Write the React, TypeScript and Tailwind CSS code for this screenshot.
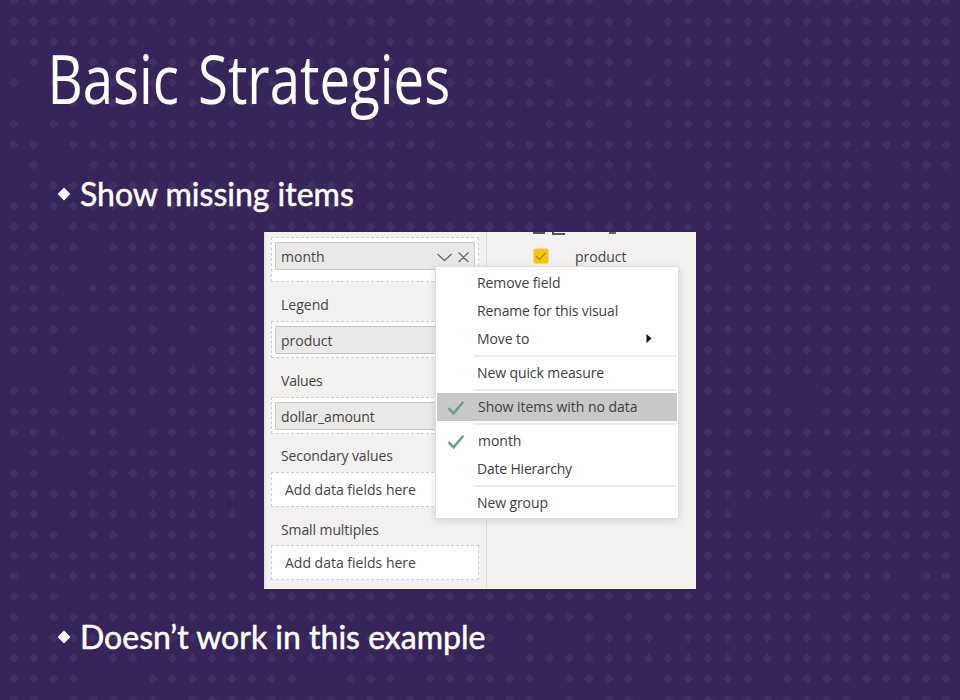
import type { ReactNode } from "react";

// Columns left empty in each row of the diamond backdrop.
const GAPS: number[][] = [
  [4, 8, 12, 19, 23, 30, 35],
  [9, 15, 20, 23, 32],
  [7, 17, 39],
  [0, 13, 27, 32, 37],
  [1, 28, 31, 34],
  [0, 1, 2, 44],
  [1, 4, 12, 26, 30, 32],
  [2, 22, 23],
  [0, 2, 3, 10, 13, 20, 33, 34, 37, 44],
  [0, 22, 34, 44, 47],
  [22, 30, 37],
  [2, 9, 28, 37],
  [4],
  [4, 11, 36, 40],
  [3, 47],
  [],
  [4, 5, 8, 10],
  [3, 9],
  [0, 1, 2, 7, 46],
  [2, 39, 40],
  [7, 35, 40],
  [3, 6],
  [0, 9, 37, 41],
  [2, 3, 37, 44],
  [6],
  [2, 12, 37, 38, 39, 40],
  [3, 6, 11],
  [],
  [1, 11, 38, 45],
  [3, 20, 44],
  [1, 30, 32, 41],
  [25, 27, 28, 33],
  [4, 7, 25],
  [4, 5, 6, 15, 16, 20, 27, 32, 38],
  [2, 8, 27, 29, 32, 43, 44],
];

function Backdrop() {
  const d = GAPS.map((gaps, row) =>
    Array.from({ length: 48 }, (_, col) =>
      gaps.includes(col)
        ? ""
        : `M${(13.8 + col * 19.835).toFixed(2)} ${(0.6 + row * 20.55 - 5).toFixed(2)}l5 5l-5 5l-5 -5z`
    ).join("")
  ).join("");
  return (
    <svg className="absolute inset-0" width="960" height="700" aria-hidden="true">
      <path d={d} fill="#3f3161" />
    </svg>
  );
}

function Bullet({ children }: { children: ReactNode }) {
  return (
    <div className="flex h-10 items-center pl-[57px] font-[Lato,sans-serif] text-[32px] leading-10 text-white">
      <svg width="14" height="14" viewBox="0 0 14 14" className="mr-[9px] shrink-0" fill="#fff">
        <path d="M7 .6L13.4 7L7 13.4L.6 7z" />
      </svg>
      <span className="whitespace-nowrap [-webkit-text-stroke:0.5px_white]">{children}</span>
    </div>
  );
}

function Well({ className, children }: { className: string; children: ReactNode }) {
  return (
    <div className={`ml-[7px] w-[208px] shrink-0 border-[1.5px] border-dashed border-[#cfcdcb] bg-white px-[3px] ${className}`}>
      {children}
    </div>
  );
}

function Pill({ children }: { children: ReactNode }) {
  return (
    <div className="mt-1 flex h-7 items-center rounded-[2px] border-[1.5px] border-[#c8c6c4] bg-[#ebe9e8] pl-[5px] pt-px">
      {children}
    </div>
  );
}

function Label({ className, children }: { className: string; children: ReactNode }) {
  return <div className={`flex shrink-0 items-center pl-[17px] ${className}`}>{children}</div>;
}

function Check() {
  return (
    <svg width="18" height="16" viewBox="0 0 18 16" fill="none" stroke="#5fa58c" strokeWidth="2.5">
      <path d="M1.5 8.2L6.6 13.4L16.3 1.8" />
    </svg>
  );
}

function Item({ children, checked, active, arrow }: { children: ReactNode; checked?: boolean; active?: boolean; arrow?: boolean }) {
  return (
    <div className={`mx-px flex h-7 shrink-0 items-center ${active ? "bg-[#c8c8c8]" : ""}`}>
      <span className="flex w-[40px] justify-start pl-[10px] pt-[2px]">{checked && <Check />}</span>
      <span className={`grow whitespace-nowrap ${checked ? "pl-px tracking-[-0.03px]" : "tracking-[-0.1px]"}`}>{children}</span>
      {arrow && (
        <svg width="6" height="9" viewBox="0 0 6 9" className="mr-[25px]">
          <path d="M.5 0L5.6 4.5L.5 9z" fill="#111" />
        </svg>
      )}
    </div>
  );
}

function Rule() {
  return <div className="my-[2px] ml-[38px] mr-px h-[2px] shrink-0 bg-[#ececec]" />;
}

function FieldPanel() {
  return (
    <div className="relative ml-[264px] flex h-[357px] w-[432px] overflow-hidden border-l-2 border-[#e8e6e4] bg-[#f2f1f0] font-['Open_Sans',sans-serif] text-[14px] leading-5 text-[#444]">
      <div className="-ml-[2px] flex w-[223px] shrink-0 flex-col border-r border-[#dddbd9] pt-[5px]">
        <Well className="h-[45px]">
          <Pill>
            <span className="grow">month</span>
            <svg width="38" height="14" viewBox="0 0 38 14" fill="none" stroke="#68666b" strokeWidth="1.3">
              <path d="M1.5 4L8.5 10.5L15.5 4M22.5 2.5L32.5 12M32.5 2.5L22.5 12" />
            </svg>
          </Pill>
        </Well>
        <Label className="h-[39px] pt-[7px]">Legend</Label>
        <Well className="h-[37px]"><Pill>product</Pill></Well>
        <Label className="h-[39px] pt-[6px]"><span className="tracking-[-0.2px]">Values</span></Label>
        <Well className="h-[37px]"><Pill><span className="tracking-[-0.1px]">dollar_amount</span></Pill></Well>
        <Label className="h-[38px] pt-[6px]"><span className="tracking-[-0.1px]">Secondary values</span></Label>
        <Well className="flex h-[35px] items-center"><span className="pl-[10px] pt-px">Add data fields here</span></Well>
        <Label className="h-[38px] pt-[7px]"><span className="tracking-[-0.1px]">Small multiples</span></Label>
        <Well className="flex h-[35px] items-center"><span className="pl-[10px] pt-px">Add data fields here</span></Well>
      </div>
      <div className="flex grow flex-col pl-[46px]">
        <div className="flex h-[3px] gap-[7px]">
          <span className="h-[2px] w-[12px] bg-[#55515a]" />
          <span className="h-[3px] w-[13px] border-b-2 border-l-2 border-[#55515a]" />
          <span className="ml-[37px] h-[2px] w-[7px] bg-[#66636a]" />
        </div>
        <div className="flex h-[43px] items-center">
          <svg width="16" height="16" viewBox="0 0 16 16" className="mb-[2px] mr-[26px]">
            <rect x=".5" y=".5" width="15" height="15" rx="2" fill="#f2c811" />
            <path d="M3 8.2L6.5 11.3L13 4.7" fill="none" stroke="#a48a20" strokeWidth="1.2" />
          </svg>
          <span>product</span>
        </div>
      </div>
      <div className="absolute left-[169px] top-[34px] flex h-[253px] w-[244px] flex-col border border-[#dedede] bg-white pt-[1.5px] text-[#404040] shadow-[0_2px_8px_rgba(0,0,0,0.12)]">
        <Item>Remove field</Item>
        <Item><span className="tracking-[-0.15px]">Rename for this visual</span></Item>
        <Item arrow>Move to</Item>
        <Rule />
        <Item>New quick measure</Item>
        <Rule />
        <Item checked active>Show items with no data</Item>
        <Rule />
        <Item checked>month</Item>
        <Item><span className="tracking-[-0.2px]">Date Hierarchy</span></Item>
        <Rule />
        <Item>New group</Item>
      </div>
    </div>
  );
}

export default function App() {
  return (
    <main className="relative h-[700px] w-[960px] overflow-hidden bg-[#37245b]">
      <Backdrop />
      <div className="relative flex flex-col">
        <h1 className="mt-[33px] h-[90px] origin-left scale-x-[0.803] whitespace-nowrap pl-[59px] font-['Open_Sans',sans-serif] text-[68px] font-normal leading-[90px] text-white [word-spacing:6px]">
          Basic Strategies
        </h1>
        <div className="mt-[51px]"><Bullet>Show missing items</Bullet></div>
        <div className="mt-[18px]"><FieldPanel /></div>
        <div className="mt-[28px]"><Bullet>Doesn’t work in this example</Bullet></div>
      </div>
    </main>
  );
}
